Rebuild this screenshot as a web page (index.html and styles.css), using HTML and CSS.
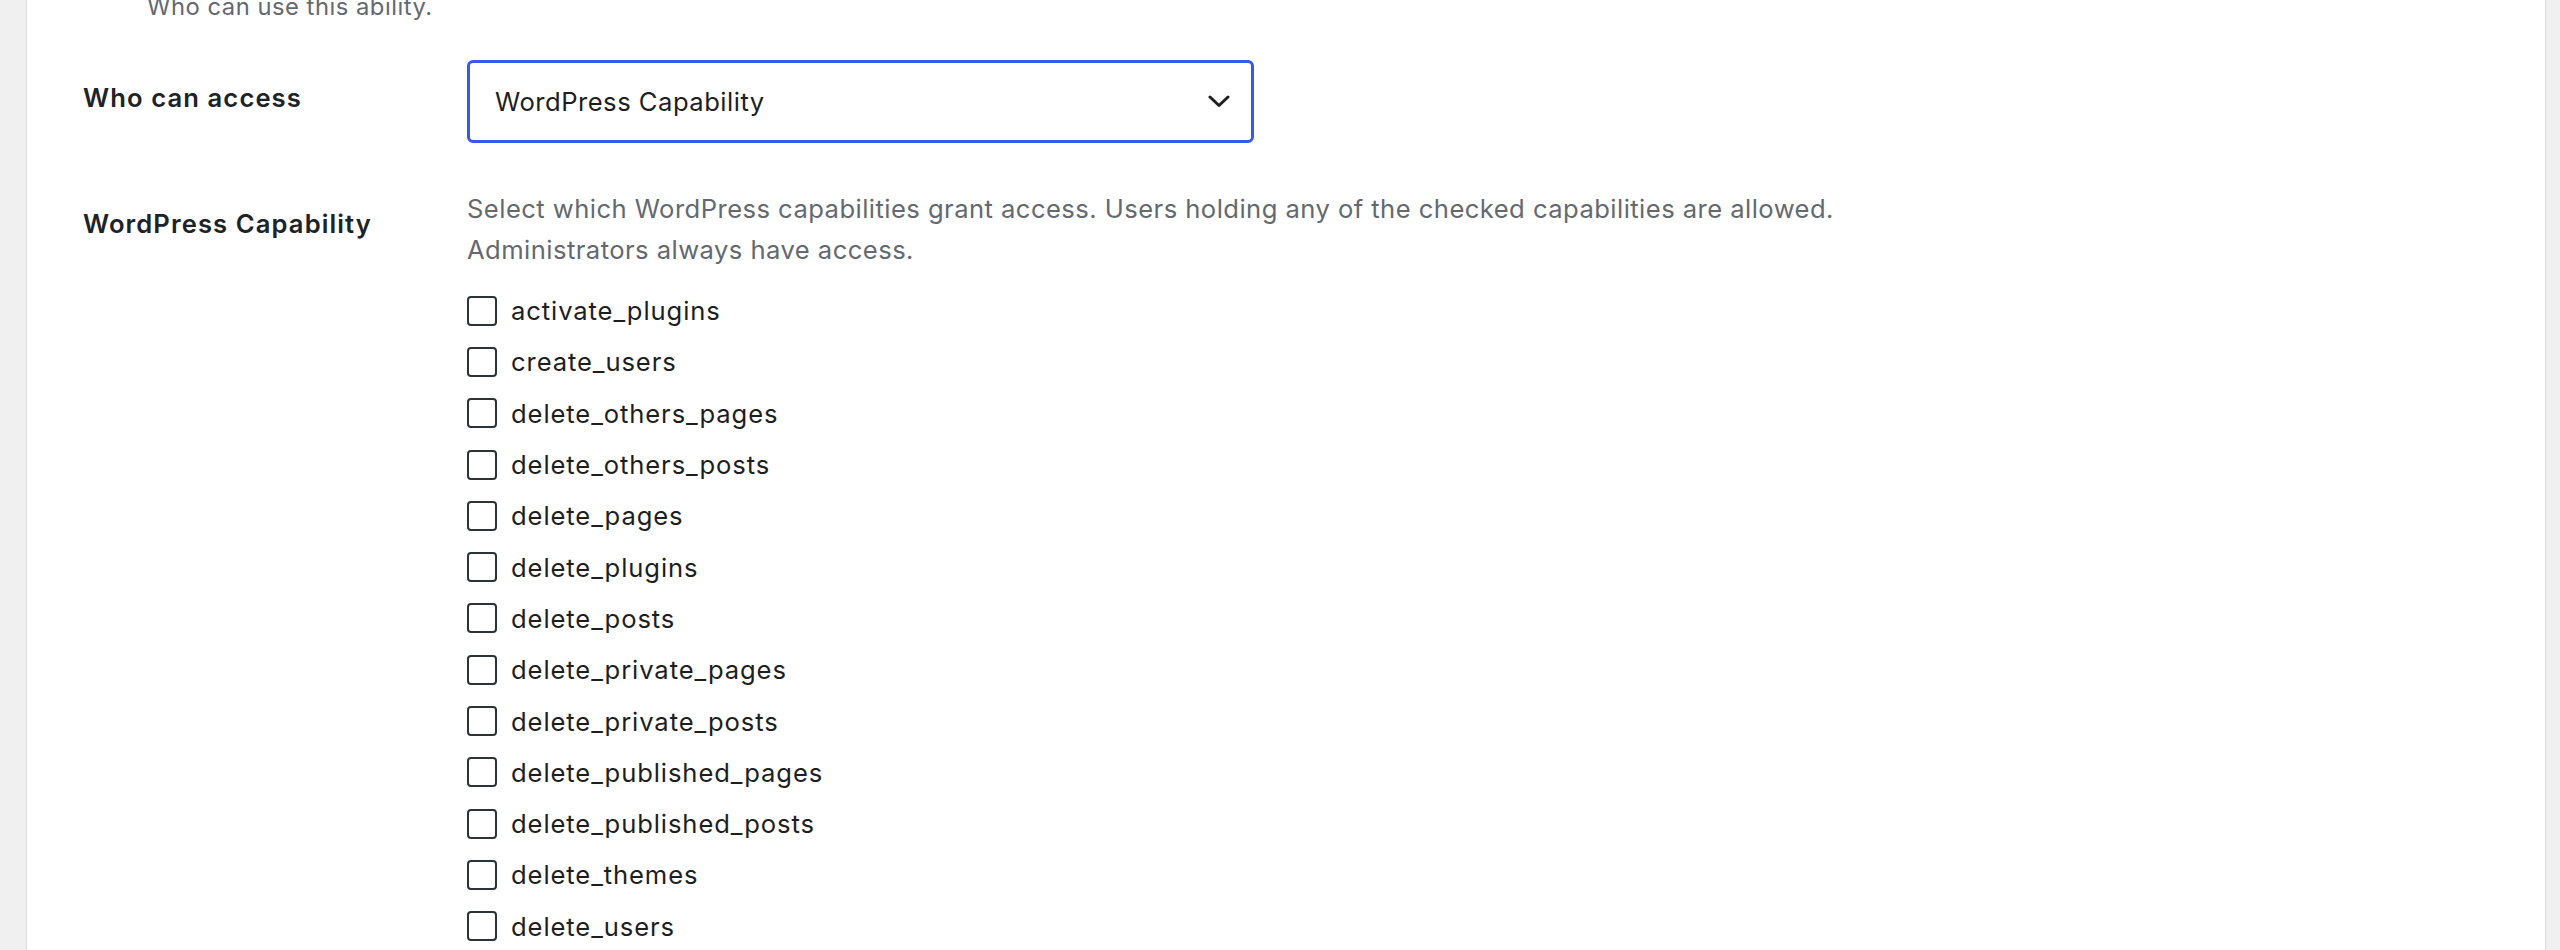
FILE: index.html
```html
<!DOCTYPE html>
<html lang="en">

<head>
    <meta charset="UTF-8">
    <title>Ability settings</title>
    <link rel="stylesheet" href="styles.css">
</head>

<body>
    <div class="page">
        <div class="panel">
            <p class="top-desc">Who can use this ability.</p>

            <!-- Access mode -->
            <div class="form-row access-row">
                <div class="row-label">Who can access</div>
                <div class="row-field">
                    <div class="select-box">
                        <span>WordPress Capability</span>
                        <svg class="chevron" width="22" height="13" viewBox="0 0 22 13">
                            <path d="M2 2 L11 10.5 L20 2" fill="none" stroke="#1e1e1e" stroke-width="3" stroke-linecap="round" stroke-linejoin="round"/>
                        </svg>
                    </div>
                </div>
            </div>

            <!-- Capabilities -->
            <div class="form-row caps-row">
                <div class="row-label">WordPress Capability</div>
                <div class="row-field">
                    <p class="desc">Select which WordPress capabilities grant access. Users holding any of the checked capabilities are allowed. Administrators always have access.</p>
                    <ul class="cap-list" id="cap-list"></ul>
                </div>
            </div>
        </div>
    </div>

    <script>
        const caps = [
            "activate_plugins", "create_users", "delete_others_pages", "delete_others_posts",
            "delete_pages", "delete_plugins", "delete_posts", "delete_private_pages",
            "delete_private_posts", "delete_published_pages", "delete_published_posts",
            "delete_themes", "delete_users", "edit_dashboard", "edit_files"
        ];

        document.getElementById("cap-list").innerHTML = caps.map(cap => `
            <li>
                <label><input type="checkbox" class="cap-check" value="${cap}"> ${cap}</label>
            </li>
        `).join('');
    </script>
</body>

</html>
```

FILE: styles.css
```css
/* General */
* {
    box-sizing: border-box;
}

body {
    margin: 0;
    background: #f0f0f1;
    font-family: 'Inter', 'Noto Sans', sans-serif;
    font-size: 25.6px;
    color: #1e1e1e;
    overflow: hidden;
}

.page {
    padding: 0 14px 0 26px;
}

.panel {
    background: #ffffff;
    border-left: 1px solid #dcdcde;
    border-right: 1px solid #dcdcde;
    padding-left: 56px;
    min-height: 1200px;
}

.top-desc {
    margin: -11px 0 0 64px;
    font-size: 23.8px;
    line-height: 36px;
    letter-spacing: 0.5px;
    color: #646970;
}

/* Form rows */
.form-row {
    display: grid;
    grid-template-columns: 384px 1fr;
}

.row-label {
    font-weight: 600;
    line-height: 38px;
    letter-spacing: 1.1px;
    color: #1d2327;
}

.access-row .row-label {
    padding-top: 54px;
}

.access-row .row-field {
    padding-top: 35px;
}

.caps-row .row-label {
    padding-top: 62px;
}

.caps-row .row-field {
    padding-top: 45px;
}

/* Select */
.select-box {
    width: 787px;
    height: 83px;
    border: 3.5px solid #3858e9;
    border-radius: 6px;
    display: flex;
    align-items: center;
    justify-content: space-between;
    padding: 0 21px 0 25px;
    letter-spacing: 0.5px;
    color: #1e1e1e;
}

.chevron {
    display: block;
}

/* Capability list */
.desc {
    margin: 0;
    max-width: 1440px;
    line-height: 41px;
    letter-spacing: 0.45px;
    color: #646970;
}

.cap-list {
    list-style: none;
    margin: 15px 0 0;
    padding: 0;
}

.cap-list li {
    height: 51.3px;
    display: flex;
    align-items: center;
}

.cap-list label {
    display: flex;
    align-items: center;
    gap: 14px;
    letter-spacing: 0.9px;
    color: #1e1e1e;
}

.cap-check {
    appearance: none;
    -webkit-appearance: none;
    width: 30px;
    height: 30px;
    margin: 0;
    border: 2.5px solid #2c3338;
    border-radius: 4px;
    background: #ffffff;
}
```
